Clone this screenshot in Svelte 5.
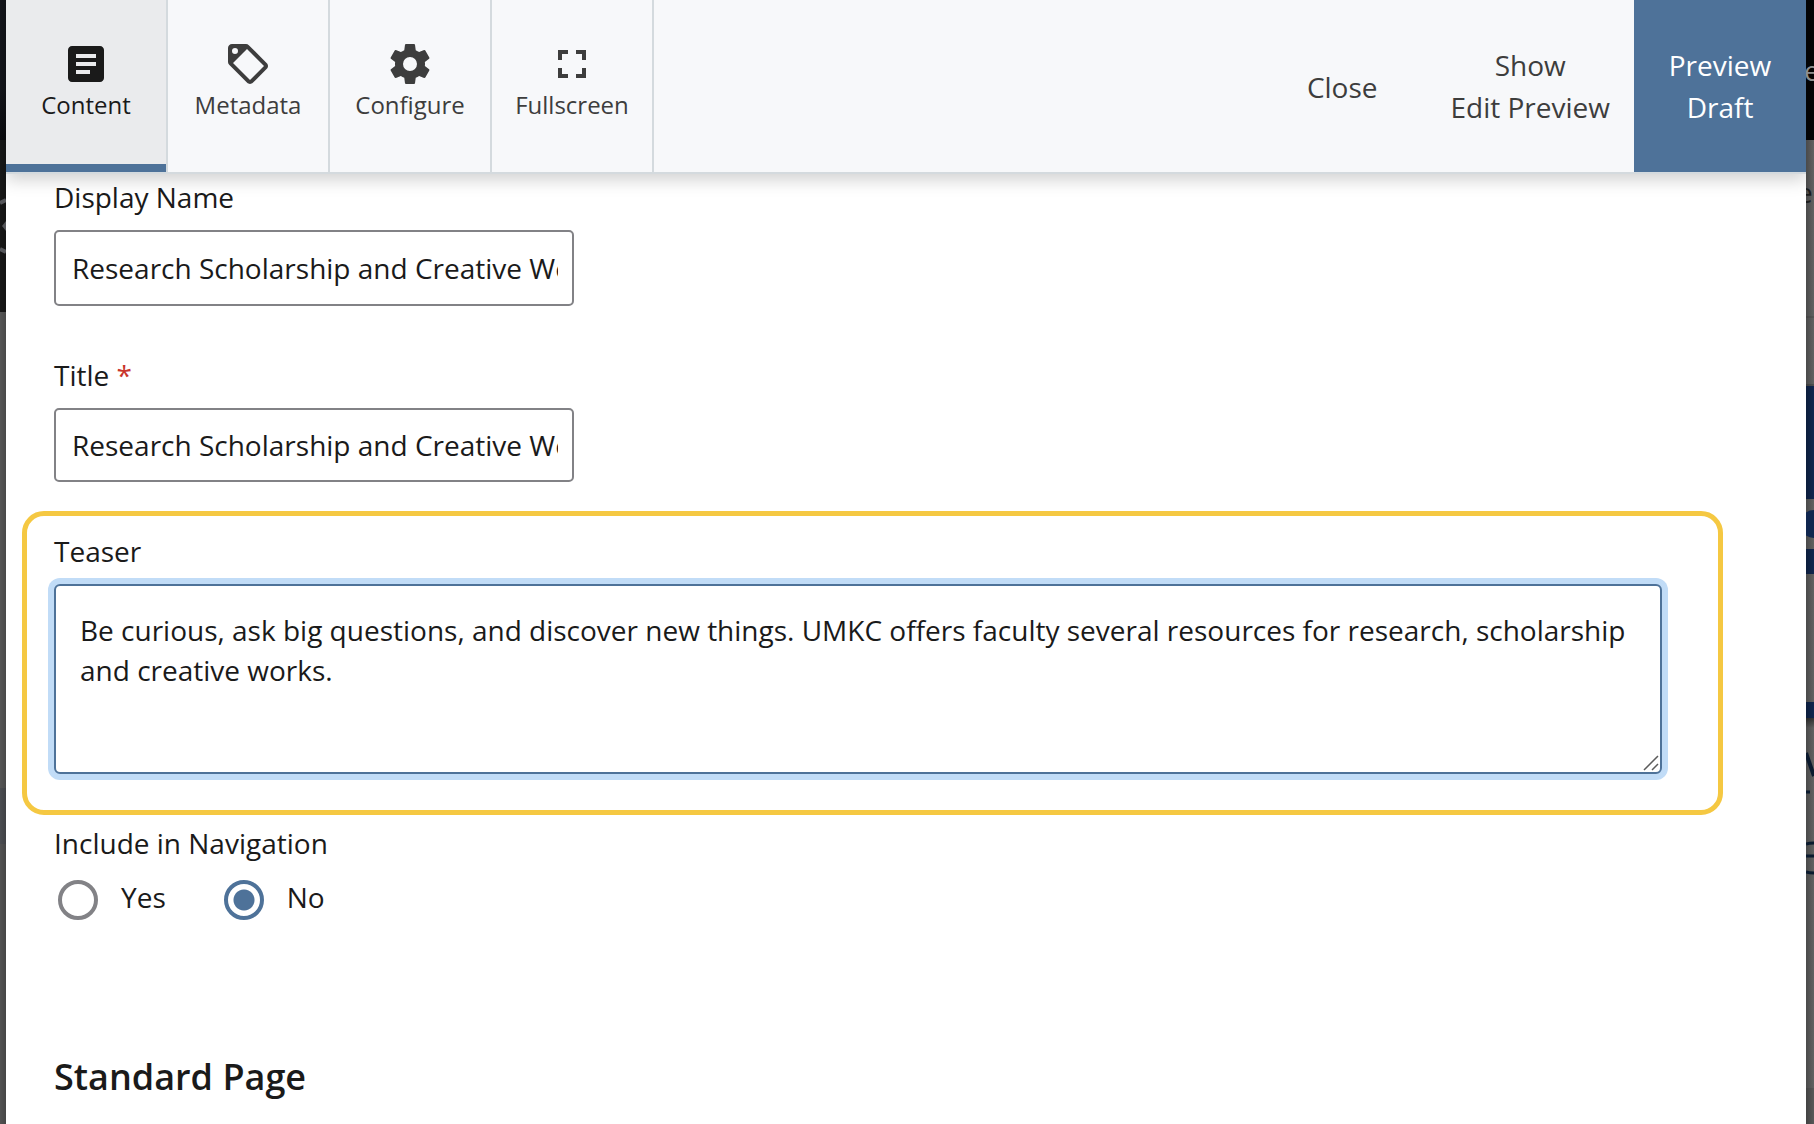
<script>
  let activeTab = $state('Content');
  let displayName = $state('Research Scholarship and Creative Works');
  let title = $state('Research Scholarship and Creative Works');
  let teaser = $state(
    'Be curious, ask big questions, and discover new things. UMKC offers faculty several resources for research, scholarship and creative works.'
  );
  let inNavigation = $state('No');

  const tabs = [
    {
      name: 'Content',
      path: 'M19 3H5c-1.1 0-2 .9-2 2v14c0 1.1.9 2 2 2h14c1.1 0 2-.9 2-2V5c0-1.1-.9-2-2-2zM14 17H7v-2h7v2zm3-4H7v-2h10v2zm0-4H7V7h10v2z'
    },
    {
      name: 'Metadata',
      path: 'M5.5 7A1.5 1.5 0 0 0 7 5.5 1.5 1.5 0 0 0 5.5 4 1.5 1.5 0 0 0 4 5.5 1.5 1.5 0 0 0 5.5 7M21.41 11.58C21.77 11.94 22 12.44 22 13C22 13.55 21.78 14.05 21.41 14.41L14.41 21.41C14.05 21.77 13.55 22 13 22C12.45 22 11.95 21.77 11.58 21.41L2.59 12.41C2.22 12.05 2 11.55 2 11V4C2 2.89 2.89 2 4 2H11C11.55 2 12.05 2.22 12.41 2.58L21.41 11.58M13 20L20 13L11.5 4.5L4.5 11.5L13 20Z'
    },
    {
      name: 'Configure',
      path: 'M12 15.5A3.5 3.5 0 0 1 8.5 12A3.5 3.5 0 0 1 12 8.5A3.5 3.5 0 0 1 15.5 12A3.5 3.5 0 0 1 12 15.5M19.43 12.97C19.47 12.65 19.5 12.33 19.5 12C19.5 11.67 19.47 11.34 19.43 11L21.54 9.37C21.73 9.22 21.78 8.95 21.66 8.73L19.66 5.27C19.54 5.05 19.27 4.96 19.05 5.05L16.56 6.05C16.04 5.66 15.5 5.32 14.87 5.07L14.5 2.42C14.46 2.18 14.25 2 14 2H10C9.75 2 9.54 2.18 9.5 2.42L9.13 5.07C8.5 5.32 7.96 5.66 7.44 6.05L4.95 5.05C4.73 4.96 4.46 5.05 4.34 5.27L2.34 8.73C2.21 8.95 2.27 9.22 2.46 9.37L4.57 11C4.53 11.34 4.5 11.67 4.5 12C4.5 12.33 4.53 12.65 4.57 12.97L2.46 14.63C2.27 14.78 2.21 15.05 2.34 15.27L4.34 18.73C4.46 18.95 4.73 19.03 4.95 18.95L7.44 17.94C7.96 18.34 8.5 18.68 9.13 18.93L9.5 21.58C9.54 21.82 9.75 22 10 22H14C14.25 22 14.46 21.82 14.5 21.58L14.87 18.93C15.5 18.67 16.04 18.34 16.56 17.94L19.05 18.95C19.27 19.03 19.54 18.95 19.66 18.73L21.66 15.27C21.78 15.05 21.73 14.78 21.54 14.63L19.43 12.97Z'
    },
    {
      name: 'Fullscreen',
      path: 'M7 14H5v5h5v-2H7v-3zm-2-4h2V7h3V5H5v5zm12 7h-3v2h5v-5h-2v3zM14 5v2h3v3h2V5h-5z'
    }
  ];
</script>

<div class="page">
  <div class="strip left" aria-hidden="true">
    <svg viewBox="0 0 6 64" width="6" height="64">
      <path d="M0 8L6 5M0 54L6 57" fill="none" stroke="#55565a" stroke-width="4" />
      <path d="M6 26L2 31L6 36Z" fill="#55565a" />
    </svg>
  </div>

  <div class="panel">
    <header>
      <nav>
        {#each tabs as tab}
          <button
            type="button"
            class="tab"
            class:active={activeTab === tab.name}
            onclick={() => (activeTab = tab.name)}
          >
            <svg viewBox="0 0 24 24" width="48" height="48" aria-hidden="true"><path d={tab.path} fill="currentColor" /></svg>
            <span>{tab.name}</span>
          </button>
        {/each}
      </nav>
      <div class="actions">
        <button type="button" class="action close">Close</button>
        <button type="button" class="action show">Show<br />Edit Preview</button>
        <button type="button" class="action primary">Preview<br />Draft</button>
      </div>
    </header>

    <form>
      <div class="field">
        <label for="display-name">Display Name</label>
        <input id="display-name" class="text tall" type="text" bind:value={displayName} />
      </div>
      <div class="field">
        <label for="title">Title <span class="required">*</span></label>
        <input id="title" class="text" type="text" required bind:value={title} />
      </div>
      <div class="highlight">
        <label for="teaser">Teaser</label>
        <div class="area">
          <textarea id="teaser" bind:value={teaser}></textarea>
          <svg class="grip" viewBox="0 0 16 16" width="16" height="16" aria-hidden="true">
            <path d="M1 15L15 1M9 15L15 9" fill="none" stroke="#5c5c5c" stroke-width="1.500" />
          </svg>
        </div>
      </div>
      <fieldset>
        <legend>Include in Navigation</legend>
        <div class="choices">
          {#each ['Yes', 'No'] as choice}
            <label class="choice">
              <input type="radio" name="navigation" value={choice} bind:group={inNavigation} />
              <span>{choice}</span>
            </label>
          {/each}
        </div>
      </fieldset>
      <h2>Standard Page</h2>
    </form>
  </div>

  <div class="strip right" aria-hidden="true">
    <span class="peek light">e</span>
    <span class="peek dark">e</span>
    <i class="dot"></i>
    <svg viewBox="0 0 8 140" width="8" height="140">
      <path d="M0 3L8 26" stroke="#0b1a2e" stroke-width="4" fill="none" />
      <path d="M0 42H4" stroke="#0b1a2e" stroke-width="3" />
      <path d="M0 94Q3 93 8 93M0 106H8M0 122Q3 123 8 123" stroke="#0b1a2e" stroke-width="3" fill="none" />
    </svg>
  </div>
</div>

<style>
  :global(body) {
    background: #555;
  }

  .page {
    display: grid;
    grid-template-columns: 6px minmax(0, 1fr) 8px;
    height: 100vh;
    overflow: hidden;
    font-family: 'Open Sans', 'Noto Sans', sans-serif;
    font-size: 28px;
    line-height: 40px;
    color: #1a1a1a;
  }

  .strip {
    position: relative;
    overflow: hidden;
  }

  .left {
    background:
      linear-gradient(90deg, transparent, rgba(0, 0, 0, 0.15)),
      linear-gradient(#13141a 0 90px, #090a0e 140px, #171717 140px 312px, #555 312px 788px, #4b4d51 788px 844px, #525252 844px);
  }

  .left svg {
    position: absolute;
    top: 195px;
    left: 0;
  }

  .right {
    background:
      linear-gradient(90deg, rgba(0, 0, 0, 0.25), transparent),
      linear-gradient(
        #050506 140px,
        #626262 140px 316px,
        #575757 316px 318px,
        #626262 318px 384px,
        #505050 384px 386px,
        #10264f 386px 499px,
        #626262 499px 549px,
        #10264f 549px 574px,
        #626262 574px 702px,
        #10264f 702px 718px,
        #333 718px,
        #626262 728px 1088px,
        #585858 1088px
      );
  }

  .peek {
    position: absolute;
    left: -2px;
  }

  .light {
    top: 50px;
    color: #8e8e8e;
  }

  .dark {
    top: 172px;
    left: -9px;
    color: #1c1c1c;
  }

  .dot {
    position: absolute;
    top: 510px;
    left: -6px;
    width: 28px;
    height: 28px;
    border-radius: 50%;
    background: #10264f;
  }

  .right svg {
    position: absolute;
    top: 750px;
    left: 0;
  }

  .panel {
    background: #fff;
  }

  header {
    position: relative;
    display: flex;
    justify-content: space-between;
    height: 172px;
    border-bottom: 2px solid #d4dade;
    background: #f7f8fa;
    box-shadow: 0 6px 16px rgba(0, 0, 0, 0.18);
    clip-path: inset(0 0 -30px 0);
  }

  nav,
  .actions {
    display: flex;
  }

  button {
    margin: 0;
    border: 0;
    background: none;
    font: inherit;
    color: #3d3d3d;
    cursor: pointer;
  }

  .tab {
    display: flex;
    flex-direction: column;
    align-items: center;
    box-sizing: content-box;
    width: 160px;
    padding: 40px 0 0;
    border-right: 2px solid #d4dade;
    font-size: 24px;
    line-height: 34px;
  }

  .tab svg {
    display: block;
  }

  .tab.active {
    background: #eaebed;
    box-shadow: inset 0 -8px #4e7299;
    color: #1a1a1a;
  }

  .action {
    padding: 0 24px;
    line-height: 42px;
    white-space: nowrap;
  }

  .close {
    padding: 2px 49px 0;
  }

  .primary {
    width: 172px;
    background: #4e7299;
    color: #fff;
  }

  form {
    padding: 3px 83px 0 16px;
  }

  .field {
    margin-bottom: 49px;
    padding-left: 32px;
  }

  .field + .highlight {
    margin-top: -20px;
  }

  label,
  legend {
    display: block;
    padding: 0;
  }

  .required {
    color: #c9352b;
  }

  .text {
    display: block;
    box-sizing: border-box;
    width: 520px;
    max-width: 100%;
    height: 74px;
    margin-top: 13px;
    padding: 0 14px 0 16px;
    border: 2px solid #828286;
    border-radius: 5px;
    background: #fff;
    font: inherit;
    color: inherit;
  }

  .tall {
    height: 76px;
  }

  .highlight {
    padding: 15px 56px 36px 27px;
    border: 5px solid #f5c842;
    border-radius: 22px;
  }

  .area {
    position: relative;
    margin-top: 13px;
  }

  textarea {
    display: block;
    box-sizing: border-box;
    width: 100%;
    height: 190px;
    padding: 24px;
    border: 2px solid #4e7299;
    border-radius: 6px;
    outline: 0;
    box-shadow: 0 0 0 6px #c1dcf7;
    background: #fff;
    font: inherit;
    color: inherit;
    resize: none;
  }

  .grip {
    position: absolute;
    right: 3px;
    bottom: 3px;
  }

  fieldset {
    margin: 8px 0 0;
    padding: 0 0 0 32px;
    border: 0;
  }

  .choices {
    display: flex;
    gap: 58px;
    margin-top: 14px;
    padding-left: 4px;
  }

  .choice {
    display: flex;
    gap: 23px;
  }

  input[type='radio'] {
    appearance: none;
    width: 40px;
    height: 40px;
    margin: 3px 0 0;
    border: 4px solid #828286;
    border-radius: 50%;
    background: #fff;
  }

  input[type='radio']:checked {
    border-color: #4e7299;
    background: radial-gradient(circle, #4e7299 10px, #fff 11px);
  }

  h2 {
    margin: 132px 0 0;
    padding-left: 32px;
    font-size: 36px;
    font-weight: 600;
    line-height: 50px;
  }
</style>
